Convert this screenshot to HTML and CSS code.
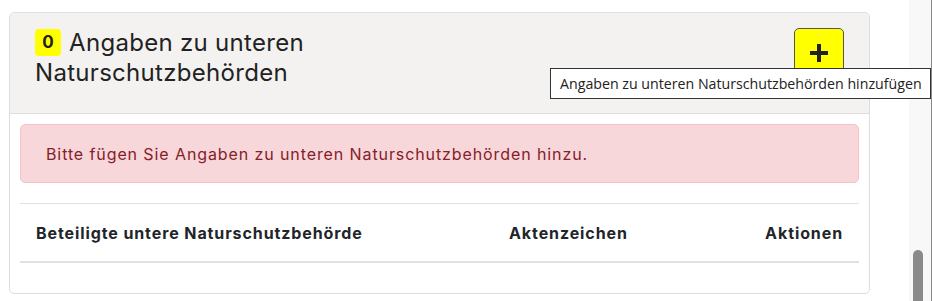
FILE: index.html
```html
<!DOCTYPE html>
<html lang="de">
<head>
  <meta charset="UTF-8" />
  <meta name="viewport" content="width=device-width, initial-scale=1.0" />
  <title>Untere Naturschutzbehörden</title>
  <link rel="stylesheet" href="styles.css">
</head>
<body>

  <div class="page">
    <section class="card">
      <header class="card-header">
        <h2 class="card-title"><span class="badge">0</span> Angaben zu unteren Naturschutzbehörden</h2>
        <button class="add-button" title="Angaben zu unteren Naturschutzbehörden hinzufügen">
          <svg width="18" height="18" viewBox="0 0 18 18"><path d="M7 0h4v7h7v4h-7v7h-4v-7h-7v-4h7z" fill="#222"/></svg>
        </button>
      </header>

      <div class="card-body">
        <div class="alert">Bitte fügen Sie Angaben zu unteren Naturschutzbehörden hinzu.</div>

        <table class="data-table">
          <thead>
            <tr>
              <th class="col-name">Beteiligte untere Naturschutzbehörde</th>
              <th class="col-ref">Aktenzeichen</th>
              <th class="col-actions">Aktionen</th>
            </tr>
          </thead>
        </table>
      </div>
    </section>
  </div>

  <div class="scrollbar"><div class="scroll-thumb"></div></div>

  <div class="tooltip">Angaben zu unteren Naturschutzbehörden hinzufügen</div>

</body>
</html>
```

FILE: styles.css
```css
body {
  margin: 0;
  display: flex;
  height: 301px;
  overflow: hidden;
  background: #fff;
  color: #222;
  font-family: 'Inter', 'Noto Sans', sans-serif;
}

.page {
  width: 909px;
  padding: 12px 0 0 9px;
  box-sizing: border-box;
}

.card {
  width: 859px;
  border: 1px solid #dedede;
  border-radius: 5px;
  overflow: hidden;
}

.card-header {
  display: flex;
  justify-content: space-between;
  align-items: flex-start;
  height: 101px;
  box-sizing: border-box;
  padding: 15px 25px 0 25px;
  background: #f3f2f1;
  border-bottom: 1px solid #dedede;
}

.card-title {
  margin: 0;
  width: 320px;
  font-size: 24px;
  font-weight: 400;
  line-height: 30px;
  letter-spacing: 0.3px;
  color: #222;
}

.badge {
  display: inline-block;
  width: 26px;
  height: 27px;
  margin-right: 1px;
  line-height: 27px;
  text-align: center;
  vertical-align: 3px;
  background: #ffff00;
  border-radius: 4px;
  font-size: 17px;
  font-weight: 700;
  letter-spacing: 0;
}

.add-button {
  width: 50px;
  height: 50px;
  display: flex;
  align-items: center;
  justify-content: center;
  background: #ffff00;
  border: 1px solid #555;
  border-radius: 5px;
  padding: 0;
  cursor: pointer;
}

.card-body {
  padding: 10px 10px 30px;
}

.alert {
  padding: 17px 25px 16px;
  background: #f8d7da;
  border: 1px solid #f5c2c7;
  border-radius: 5px;
  color: #842029;
  font-size: 16px;
  line-height: 24px;
  letter-spacing: 0.9px;
}

.data-table {
  width: 100%;
  margin-top: 20px;
  border-collapse: collapse;
  border-top: 1px solid #dee2e6;
}

.data-table th {
  padding: 17px 16px 16px;
  font-size: 16px;
  font-weight: 700;
  line-height: 24px;
  letter-spacing: 0.9px;
  text-align: left;
  color: #212529;
  border-bottom: 2px solid #dee2e6;
}

.data-table .col-name {
  width: 441px;
}

.data-table .col-actions {
  text-align: right;
}

.scrollbar {
  position: relative;
  width: 23px;
  background: #f8f8f8;
  border-right: 1px solid #888;
  box-sizing: border-box;
}

.scroll-thumb {
  position: absolute;
  left: 4px;
  top: 250px;
  width: 10px;
  height: 60px;
  background: #8a8a8a;
  border-radius: 5px;
}

.tooltip {
  position: absolute;
  left: 550px;
  top: 68px;
  width: 381px;
  height: 31px;
  box-sizing: border-box;
  padding: 0 9px;
  background: #fff;
  border: 1px solid #333;
  font-family: 'Open Sans', sans-serif;
  font-size: 14.2px;
  line-height: 29px;
  white-space: nowrap;
  color: #222;
}
```
